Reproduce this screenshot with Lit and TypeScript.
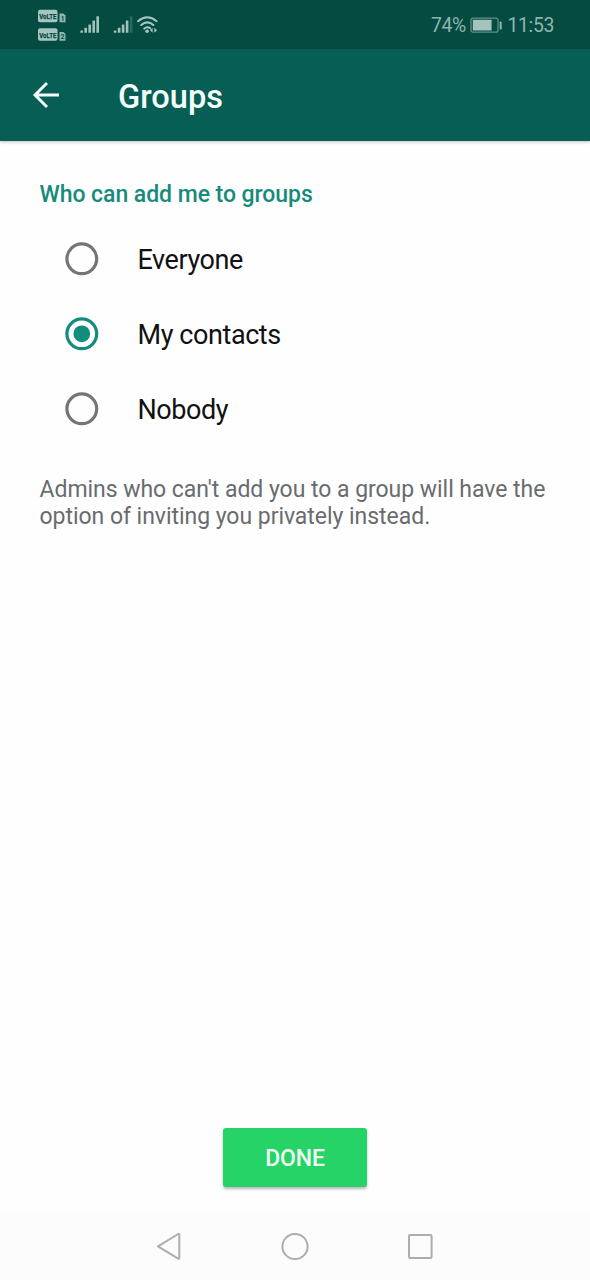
import { LitElement, html, svg, css } from "lit";
import { customElement, state } from "lit/decorators.js";
import { classMap } from "lit/directives/class-map.js";

@customElement("status-bar")
class StatusBar extends LitElement {
  static styles = css`
    :host { display: flex; height: 49px; background: #044b42; color: #8fb5ae; justify-content: space-between; }
    .right { display: flex; align-items: center; padding: 2px 36px 0 0; font-size: 19.4px; letter-spacing: -0.35px; line-height: 24px; }
    .battery { margin: 0 4px 0 4.5px; }
    svg { display: block; }
    .tag { font: 700 8px "Roboto", sans-serif; fill: #044b42; stroke: #044b42; stroke-width: 0.25; }
    .sim { font: 700 6.5px "Roboto", sans-serif; fill: #044b42; }
  `;

  private volte(y: number, sim: string) {
    return svg`
      <rect x="38" y=${y} width="19.5" height="12.5" rx="2" fill="#a5c6c0"/>
      <text class="tag" x="39.3" y=${y + 9.3} textLength="17" lengthAdjust="spacingAndGlyphs">VoLTE</text>
      <path d="M59.5 ${y + 3.8}h4l2 2v6.7h-6z" fill="#8fb5ae"/>
      <text class="sim" x="60.7" y=${y + 10.7}>${sim}</text>`;
  }

  private bars(x: number, full: number) {
    return [0, 1, 2, 3, 4].map((i) => {
      const h = [2.4, 5, 8.4, 12.4, 16.6][i];
      return svg`<rect x=${x + i * 4} y=${32.8 - h} width="2.6" height=${h} rx="0.5"
        fill=${i < full ? "#a0c2bc" : "#2b6960"}/>`;
    });
  }

  render() {
    return html`
      <svg width="170" height="49" viewBox="0 0 170 49">
        ${this.volte(9.8, "1")}${this.volte(28.3, "2")}
        ${this.bars(80.4, 5)}${this.bars(113.8, 4)}
        <g fill="none" stroke="#a5c6c0" stroke-width="2" stroke-linecap="round">
          <path d="M138 21.2Q147.3 13.4 156.6 21.2"/>
          <path d="M141.2 25Q147.3 19.7 153.4 25"/>
          <path d="M144.3 28.6Q147.3 26 150.2 28.2"/>
        </g>
        <circle cx="147.1" cy="31.2" r="1.8" fill="#a5c6c0"/>
        <path d="M152.6 27.7v5l-2.6-2.5zM154.3 27.7v5l2.7-2.5z" fill="#a5c6c0"/>
      </svg>
      <div class="right">
        <span>74%</span>
        <svg class="battery" width="33" height="18" viewBox="0 0 33 18">
          <rect x="1" y="1.2" width="27" height="14" rx="2" fill="none" stroke="#629287" stroke-width="1.3"/>
          <rect x="2.8" y="2.8" width="18.8" height="10.8" rx="0.5" fill="#a5c2bd"/>
          <rect x="29.7" y="4.4" width="2" height="8" rx="0.7" fill="#8fb5ae"/>
        </svg>
        <span>11:53</span>
      </div>`;
  }
}

@customElement("title-bar")
class TitleBar extends LitElement {
  static styles = css`
    :host { display: flex; align-items: center; height: 92px; padding-left: 32px; gap: 58px; background: #075e54; color: #f4fffc; box-shadow: 0 1px 3px rgba(0, 0, 0, 0.25); }
    h1 { margin: 4px 0 0; font-size: 32.6px; line-height: 38px; font-weight: 500; }
    svg { display: block; }
  `;
  render() {
    return html`
      <svg width="28" height="28" viewBox="0 0 28 28" fill="none" stroke="#f4fffc" stroke-width="2.9">
        <path d="M27 14H3.5M15 2L3 14l12 12"/>
      </svg>
      <h1>Groups</h1>`;
  }
}

@customElement("nav-bar")
class NavBar extends LitElement {
  static styles = css`
    :host { display: flex; justify-content: center; height: 67px; background: #fcfcfc; }
  `;
  render() {
    return html`
      <svg width="310" height="67" viewBox="0 0 310 67" fill="none" stroke="#adadad" stroke-width="2" stroke-linejoin="round">
        <path d="M18 33.3L38.2 21Q39.3 20.5 39.3 21.8V44.8Q39.3 46.2 38.2 45.6Z"/>
        <circle cx="155" cy="33.5" r="12.6"/>
        <rect x="269" y="22" width="22.6" height="23" rx="1.2"/>
      </svg>`;
  }
}

@customElement("app-root")
class AppRoot extends LitElement {
  static styles = css`
    :host { display: flex; flex-direction: column; height: 1280px; background: #fefefe; font-family: "Roboto", sans-serif; overflow: hidden; }
    title-bar { flex: none; }
    main { flex: 1; display: flex; flex-direction: column; padding: 40px 39.5px 26px; }
    h2 { margin: 0; font-size: 23px; letter-spacing: -0.05px; line-height: 28px; font-weight: 500; color: #168b7a; }
    .options { display: flex; flex-direction: column; margin-top: 12px; }
    .option { display: flex; align-items: center; height: 75px; padding-left: 25.5px; }
    .radio { display: block; width: 34px; height: 34px; margin-right: 38.5px; color: #757575; }
    .radio.on { color: #128c7e; }
    .label { font-size: 27px; letter-spacing: -0.42px; line-height: 30px; color: #111; padding-top: 3px; }
    p { margin: 29.5px 0 0; font-size: 23px; letter-spacing: -0.04px; line-height: 27.2px; color: #686c6e; white-space: nowrap; }
    button { margin: auto auto 0; width: 144px; height: 59px; border: 0; padding: 2px 0 0; border-radius: 3px; background: #25d366; color: #effff4; font: 500 23px/28px "Roboto", sans-serif; letter-spacing: -0.15px; box-shadow: 0 2px 3px rgba(0, 0, 0, 0.28); }
  `;

  @state() private selected = "My contacts";

  render() {
    return html`
      <status-bar></status-bar>
      <title-bar></title-bar>
      <main>
        <h2>Who can add me to groups</h2>
        <div class="options" role="radiogroup">
          ${["Everyone", "My contacts", "Nobody"].map((o) => html`
            <div class="option" role="radio" aria-checked=${o === this.selected} @click=${() => (this.selected = o)}>
              <svg class=${classMap({ radio: true, on: o === this.selected })} viewBox="0 0 34 34">
                <circle cx="16.8" cy="16.8" r="14.9" fill="none" stroke="currentColor" stroke-width="3.2"/>
                ${o === this.selected ? svg`<circle cx="16.8" cy="16.8" r="8.4" fill="currentColor"/>` : ""}
              </svg>
              <span class="label">${o}</span>
            </div>`)}
        </div>
        <p>Admins who can't add you to a group will have the<br>option of inviting you privately instead.</p>
        <button>DONE</button>
      </main>
      <nav-bar></nav-bar>`;
  }
}
